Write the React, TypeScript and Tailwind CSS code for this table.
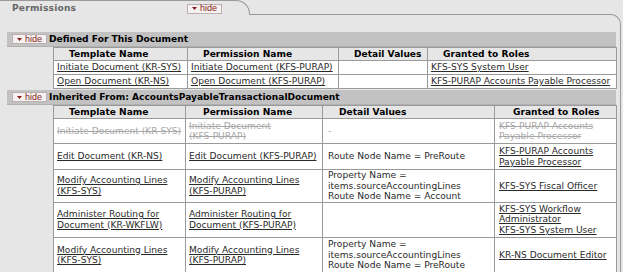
import React from 'react'

type Row = {
  t: string[]
  p: string[]
  d: string[]
  g: string[][]
  struck?: boolean
  h: string
}

const inherited: Row[] = [
  {
    t: ['Initiate Document (KR-SYS)'],
    p: ['Initiate Document', '(KFS-PURAP)'],
    d: ['-'],
    g: [['KFS-PURAP Accounts', 'Payable Processor']],
    struck: true,
    h: 'h-[25px]',
  },
  {
    t: ['Edit Document (KR-NS)'],
    p: ['Edit Document (KFS-PURAP)'],
    d: ['Route Node Name = PreRoute'],
    g: [['KFS-PURAP Accounts', 'Payable Processor']],
    h: 'h-[26px]',
  },
  {
    t: ['Modify Accounting Lines', '(KFS-SYS)'],
    p: ['Modify Accounting Lines', '(KFS-PURAP)'],
    d: ['Property Name =', 'items.sourceAccountingLines', 'Route Node Name = Account'],
    g: [['KFS-SYS Fiscal Officer']],
    h: 'h-[32px]',
  },
  {
    t: ['Administer Routing for', 'Document (KR-WKFLW)'],
    p: ['Administer Routing for', 'Document (KFS-PURAP)'],
    d: [],
    g: [['KFS-SYS Workflow', 'Administrator'], ['KFS-SYS System User']],
    h: 'h-[35px]',
  },
  {
    t: ['Modify Accounting Lines', '(KFS-SYS)'],
    p: ['Modify Accounting Lines', '(KFS-PURAP)'],
    d: ['Property Name =', 'items.sourceAccountingLines', 'Route Node Name = PreRoute'],
    g: [['KR-NS Document Editor']],
    h: 'h-[36px]',
  },
]

function HideButton() {
  return (
    <span className="flex items-center gap-[3px] h-[10px] px-[4px] bg-[#f5f1f1] border border-[#bcb0b0] font-['Liberation_Sans',sans-serif] text-[9px] leading-none text-[#861c1c]">
      <svg width="5" height="3" viewBox="0 0 5 3">
        <path d="M0 0h5L2.5 3z" fill="#861c1c" />
      </svg>
      hide
    </span>
  )
}

function Lines({ lines, className }: { lines: string[]; className?: string }) {
  return (
    <span className={className}>
      {lines.map((l, i) => (
        <React.Fragment key={i}>
          {i > 0 && <br />}
          {l}
        </React.Fragment>
      ))}
    </span>
  )
}

function SectionBar({ title }: { title: string }) {
  return (
    <div className="flex items-center h-[15px] bg-[#c2c2c2] border-b border-[#b0b0b0] pl-[5px] gap-[2px]">
      <HideButton />
      <span className="font-bold text-black">{title}</span>
    </div>
  )
}

const th = 'border border-[#9a9a9a] bg-[#e6e6e6] font-bold text-black text-left pl-[15px] p-0'
const td = 'border border-[#9a9a9a] bg-white align-middle whitespace-nowrap'

export default function App() {
  return (
    <div className="w-[623px] h-[272px] overflow-hidden bg-[#e6e6e6] font-['DejaVu_Sans',sans-serif] text-[9.1px] leading-[10.5px] text-[#2a2a2a]">
      <div className="w-[621px]">
        {/* Tab */}
        <div className="flex items-start">
          <div className="w-[250px] h-[15px] border-t border-r border-[#9a9a9a] rounded-tr-[14px] flex items-center pl-[12px] pt-[1px]">
            <span className="w-[175px] font-bold text-[#666] tracking-[0.2px]">Permissions</span>
            <HideButton />
          </div>
          <div className="flex-1 mt-[14px] h-[10px] border-t border-r border-[#9a9a9a] rounded-tr-[10px]" />
        </div>

        {/* Body */}
        <div className="border-r border-[#9a9a9a] pl-[7px] pr-[4px] pt-[8px]">
          <SectionBar title="Defined For This Document" />
          <div className="pl-[46px]">
            <table className="w-[563px] border-collapse table-fixed">
              <colgroup>
                <col className="w-[134px]" />
                <col className="w-[151px]" />
                <col className="w-[89px]" />
                <col className="w-[189px]" />
              </colgroup>
              <thead>
                <tr className="h-[13px]">
                  <th className={th}>Template Name</th>
                  <th className={th}>Permission Name</th>
                  <th className={th}>Detail Values</th>
                  <th className={th}>Granted to Roles</th>
                </tr>
              </thead>
              <tbody>
                <tr className="h-[14px]">
                  <td className={`${td} pl-[3px]`}><span className="underline">Initiate Document (KR-SYS)</span></td>
                  <td className={`${td} pl-[3px]`}><span className="underline">Initiate Document (KFS-PURAP)</span></td>
                  <td className={td} />
                  <td className={`${td} pl-[3px]`}><span className="underline">KFS-SYS System User</span></td>
                </tr>
                <tr className="h-[14px]">
                  <td className={`${td} pl-[3px]`}><span className="underline">Open Document (KR-NS)</span></td>
                  <td className={`${td} pl-[3px]`}><span className="underline">Open Document (KFS-PURAP)</span></td>
                  <td className={td} />
                  <td className={`${td} pl-[3px]`}><span className="underline">KFS-PURAP Accounts Payable Processor</span></td>
                </tr>
              </tbody>
            </table>
          </div>

          <div className="pt-[1px]">
            <SectionBar title="Inherited From: AccountsPayableTransactionalDocument" />
          </div>
          <div className="pl-[46px]">
            <table className="w-[563px] border-collapse table-fixed">
              <colgroup>
                <col className="w-[132px]" />
                <col className="w-[137px]" />
                <col className="w-[172px]" />
                <col className="w-[122px]" />
              </colgroup>
              <thead>
                <tr className="h-[13px]">
                  <th className={th}>Template Name</th>
                  <th className={`${th} pl-[17px]`}>Permission Name</th>
                  <th className={`${th} pl-[16px]`}>Detail Values</th>
                  <th className={`${th} pl-[18px]`}>Granted to Roles</th>
                </tr>
              </thead>
              <tbody>
                {inherited.map((r, i) => {
                  const link = r.struck ? 'line-through text-[#a8a8a8]' : 'underline'
                  return (
                    <tr key={i} className={r.h}>
                      <td className={`${td} pl-[3px]`}>
                        <Lines lines={r.t} className={link} />
                      </td>
                      <td className={`${td} pl-[3px]`}>
                        <Lines lines={r.p} className={link} />
                      </td>
                      <td className={`${td} pl-[5px]`}>
                        <Lines lines={r.d} className={r.struck ? 'text-[#aaa]' : ''} />
                      </td>
                      <td className={`${td} pl-[4px]`}>
                        {r.g.map((g, j) => (
                          <React.Fragment key={j}>
                            {j > 0 && <br />}
                            <Lines lines={g} className={link} />
                          </React.Fragment>
                        ))}
                      </td>
                    </tr>
                  )
                })}
              </tbody>
            </table>
          </div>
        </div>
      </div>
    </div>
  )
}
